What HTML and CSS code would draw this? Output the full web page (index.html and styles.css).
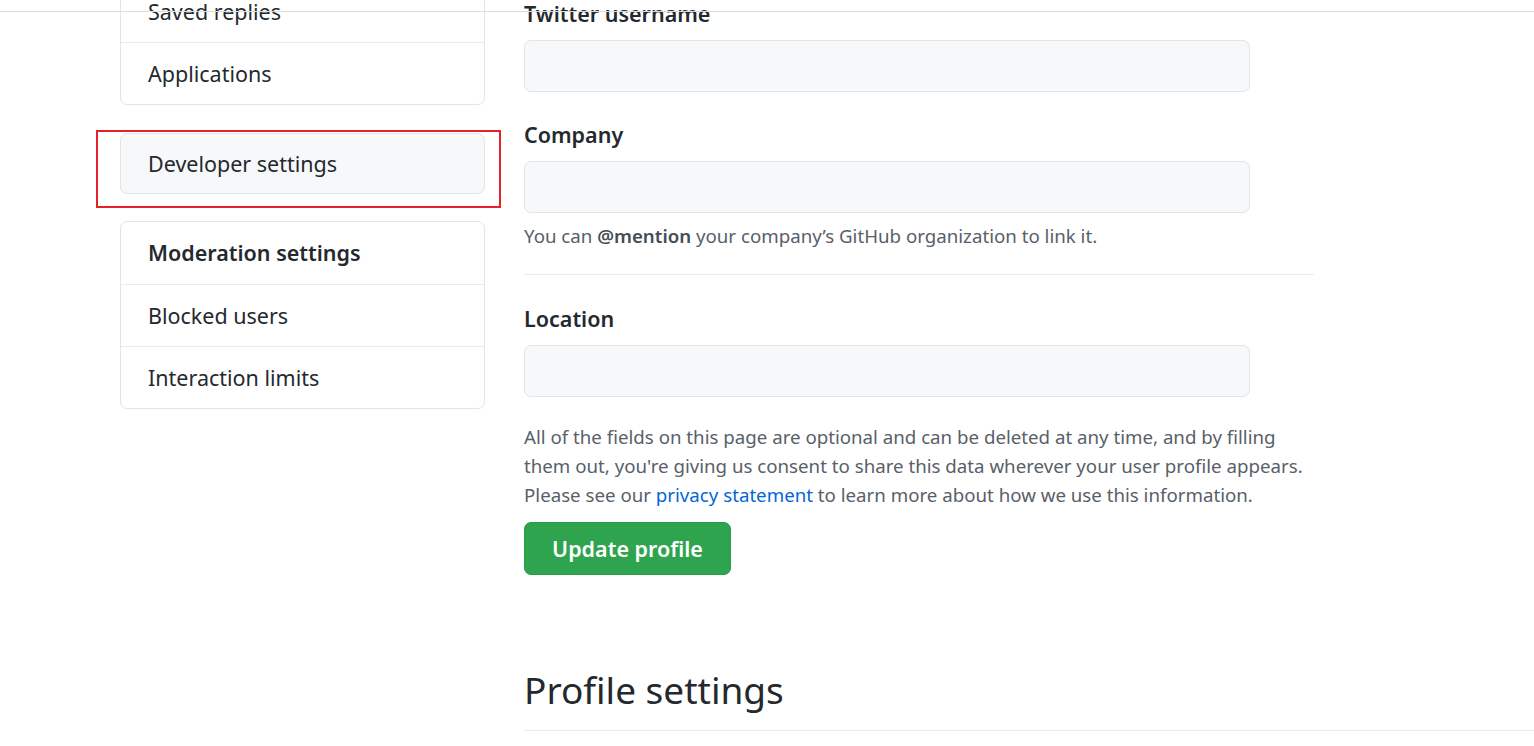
FILE: index.html
```html
<!DOCTYPE html>
<html lang="en">
<head>
<meta charset="utf-8">
<title>Profile settings</title>
<link rel="stylesheet" href="styles.css">
</head>
<body>
<div class="topline"></div>
<div class="layout">
  <aside class="sidebar">
    <nav class="menu">
      <a class="menu-item">Saved replies</a>
      <a class="menu-item">Applications</a>
    </nav>
    <nav class="menu menu-dev">
      <a class="menu-item">Developer settings</a>
      <div class="highlight"></div>
    </nav>
    <nav class="menu">
      <div class="menu-item menu-heading">Moderation settings</div>
      <a class="menu-item">Blocked users</a>
      <a class="menu-item">Interaction limits</a>
    </nav>
  </aside>
  <main class="main">
    <div class="form-group">
      <label class="label">Twitter username</label>
      <input class="input" type="text">
    </div>
    <div class="form-group">
      <label class="label">Company</label>
      <input class="input" type="text">
      <p class="note">You can <strong>@mention</strong> your company’s GitHub organization to link it.</p>
    </div>
    <hr class="divider">
    <div class="form-group">
      <label class="label">Location</label>
      <input class="input" type="text">
    </div>
    <p class="info">All of the fields on this page are optional and can be deleted at any time, and by filling them out, you're giving us consent to share this data wherever your user profile appears. Please see our <a class="link">privacy statement</a> to learn more about how we use this information.</p>
    <button class="btn">Update profile</button>
    <h2 class="section-title">Profile settings</h2>
  </main>
</div>
</body>
</html>
```

FILE: styles.css
```css
html, body {
  margin: 0;
  padding: 0;
  background: #ffffff;
  overflow: hidden;
}
body {
  font-family: "Noto Sans", "Open Sans", sans-serif;
  color: #24292e;
  width: 1534px;
  height: 746px;
}
.topline {
  position: absolute;
  left: 0;
  top: 11px;
  width: 1534px;
  height: 1px;
  background: #dcdcdc;
  z-index: 5;
}
.layout {
  display: flex;
  margin-top: -20px;
  padding-left: 120px;
  gap: 39px;
}
.sidebar {
  width: 365px;
  flex: none;
  display: flex;
  flex-direction: column;
}
.menu {
  border: 1px solid #e1e4e8;
  border-radius: 7px;
  background: #fff;
  display: flex;
  flex-direction: column;
  margin-bottom: 28px;
}
.menu-dev {
  position: relative;
  background: #f6f8fa;
  margin-bottom: 27px;
}
.menu-item {
  display: block;
  height: 61px;
  line-height: 61px;
  padding-left: 27px;
  font-size: 21.5px;
  color: #24292e;
  border-top: 1px solid #e8eaed;
}
.menu-item:first-child {
  border-top: 0;
}
.menu-dev .menu-item {
  height: 59px;
  line-height: 59px;
}
.menu-heading {
  font-weight: 600;
  height: 62px;
  line-height: 62px;
}
.highlight {
  position: absolute;
  left: -25px;
  top: -4px;
  width: 401px;
  height: 74px;
  border: 2px solid #e8202a;
}
.main {
  width: 790px;
  flex: none;
  padding-top: 19px;
}
.form-group {
  margin-bottom: 28px;
}
.label {
  display: block;
  font-size: 21.5px;
  font-weight: 600;
  line-height: 30px;
  margin-bottom: 11px;
}
.input {
  display: block;
  box-sizing: border-box;
  width: 726px;
  height: 52px;
  background: #f6f8fa;
  border: 1px solid #e1e4e8;
  border-radius: 7px;
  margin: 0;
  font-size: 20px;
}
.note {
  margin: 9px 0 0;
  font-size: 18.7px;
  line-height: 28px;
  color: #586069;
}
.note strong {
  font-weight: 600;
  color: #444d56;
}
.divider {
  margin: -4px 0 29px;
  border: 0;
  height: 1px;
  background: #e8eaed;
}
.info {
  margin: -3px 0 13px;
  font-size: 18.7px;
  line-height: 29px;
  color: #586069;
}
.link {
  color: #0366d6;
}
.btn {
  display: block;
  box-sizing: border-box;
  width: 207px;
  height: 53px;
  background: #2ea44f;
  color: #fff;
  border: 1px solid #2a9a49;
  border-radius: 7px;
  font-family: inherit;
  font-size: 21.5px;
  font-weight: 600;
  padding: 0;
}
.section-title {
  margin: 92px -300px 0 0;
  font-size: 37px;
  font-weight: 400;
  line-height: 45px;
  padding-bottom: 18px;
  border-bottom: 1px solid #e8eaed;
}
```
